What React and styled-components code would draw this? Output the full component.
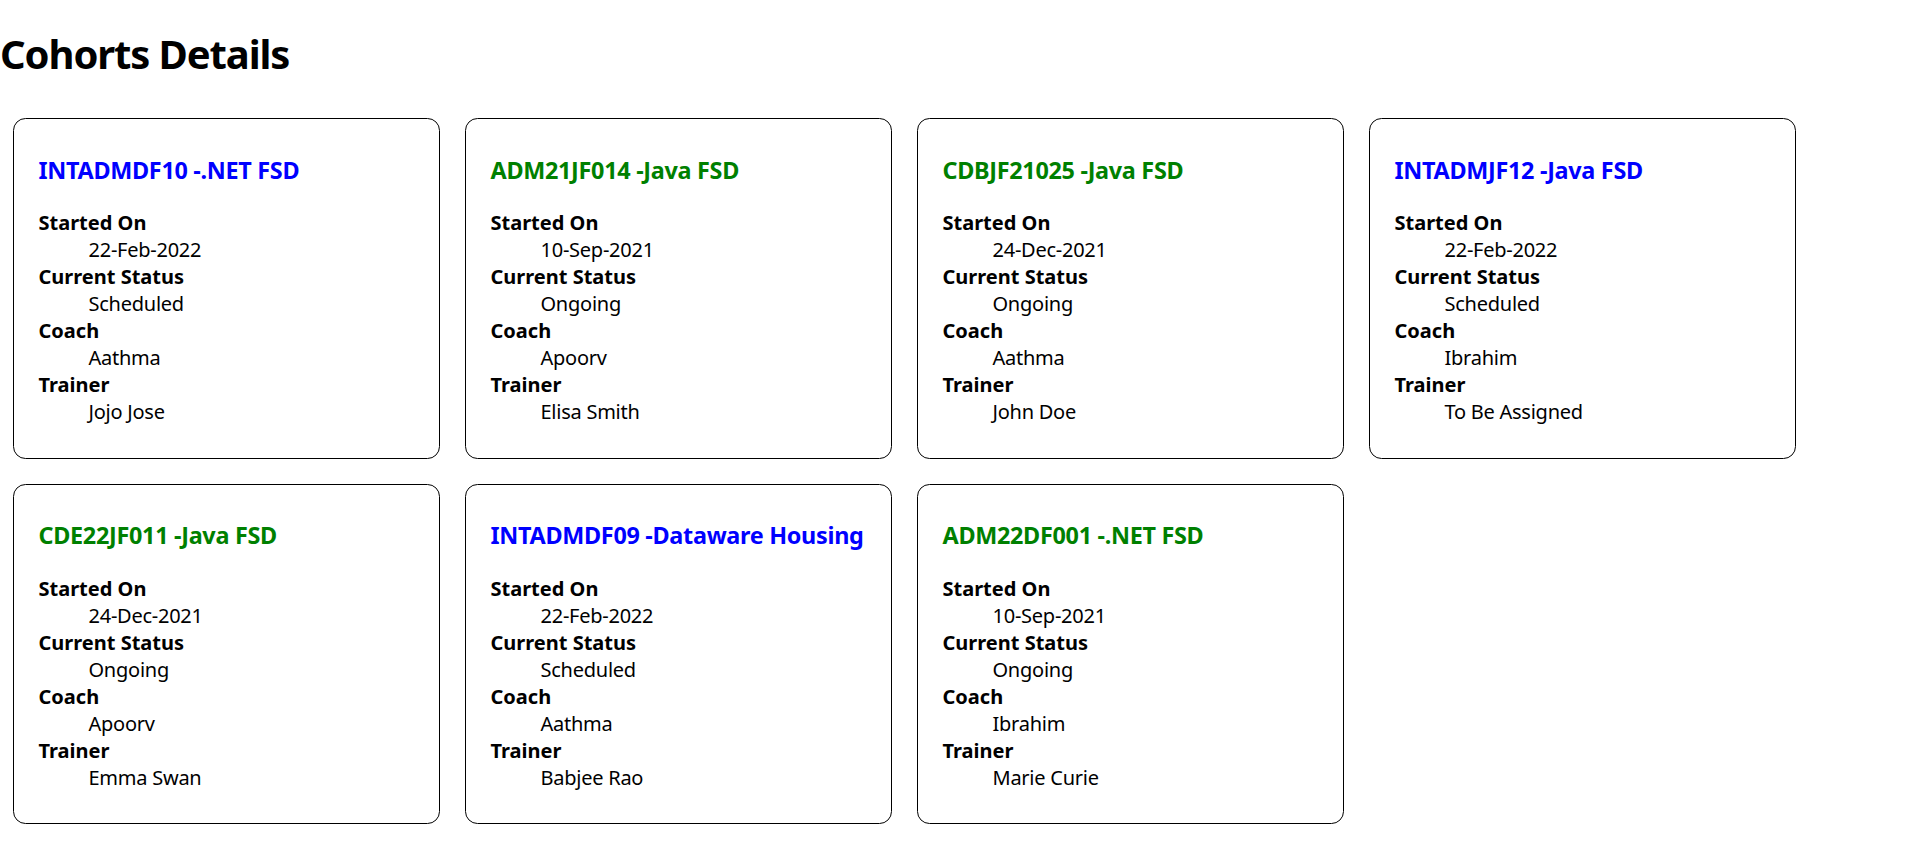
import React from "react";
import styled, { createGlobalStyle } from "styled-components";

const GlobalStyle = createGlobalStyle`
  html, body {
    margin: 0;
    padding: 0;
    background: #ffffff;
    color: #000000;
    font-family: "Noto Sans", "Open Sans", sans-serif;
  }
`;

const Page = styled.main`
  padding: 0;
`;

const Title = styled.h1`
  margin: 26.8px 0 25.5px;
  font-size: 40px;
  line-height: 53px;
  font-weight: 700;
  letter-spacing: -1.1px;
`;

const Grid = styled.div`
  display: flex;
  flex-wrap: wrap;
  align-items: flex-start;
`;

const Card = styled.section`
  box-sizing: content-box;
  width: 375px;
  margin: 12.5px;
  padding: 12.5px 25px;
  border: 1.25px solid #000;
  border-radius: 12.5px;
`;

const CardTitle = styled.h3`
  margin: 23.4px 0;
  font-size: 23.4px;
  line-height: 31px;
  font-weight: 700;
  white-space: nowrap;
  letter-spacing: -0.3px;
  color: ${(p) => (p.$tone === "blue" ? "#0000ff" : "#008000")};
`;

const List = styled.dl`
  margin: 20px 0;
`;

const Term = styled.dt`
  font-size: 20px;
  line-height: 27px;
  font-weight: 700;
`;

const Value = styled.dd`
  margin: 0 0 0 50px;
  font-size: 20px;
  line-height: 27px;
  letter-spacing: -0.25px;
`;

const cohorts = [
  { code: "INTADMDF10", tech: ".NET FSD", start: "22-Feb-2022", status: "Scheduled", coach: "Aathma", trainer: "Jojo Jose" },
  { code: "ADM21JF014", tech: "Java FSD", start: "10-Sep-2021", status: "Ongoing", coach: "Apoorv", trainer: "Elisa Smith" },
  { code: "CDBJF21025", tech: "Java FSD", start: "24-Dec-2021", status: "Ongoing", coach: "Aathma", trainer: "John Doe" },
  { code: "INTADMJF12", tech: "Java FSD", start: "22-Feb-2022", status: "Scheduled", coach: "Ibrahim", trainer: "To Be Assigned" },
  { code: "CDE22JF011", tech: "Java FSD", start: "24-Dec-2021", status: "Ongoing", coach: "Apoorv", trainer: "Emma Swan" },
  { code: "INTADMDF09", tech: "Dataware Housing", start: "22-Feb-2022", status: "Scheduled", coach: "Aathma", trainer: "Babjee Rao" },
  { code: "ADM22DF001", tech: ".NET FSD", start: "10-Sep-2021", status: "Ongoing", coach: "Ibrahim", trainer: "Marie Curie" },
];

function CohortCard({ c }) {
  const tone = c.status === "Scheduled" ? "blue" : "green";
  return (
    <Card>
      <CardTitle $tone={tone}>
        {c.code} -{c.tech}
      </CardTitle>
      <List>
        <Term>Started On</Term>
        <Value>{c.start}</Value>
        <Term>Current Status</Term>
        <Value>{c.status}</Value>
        <Term>Coach</Term>
        <Value>{c.coach}</Value>
        <Term>Trainer</Term>
        <Value>{c.trainer}</Value>
      </List>
    </Card>
  );
}

export default function App() {
  return (
    <Page>
      <GlobalStyle />
      <Title>Cohorts Details</Title>
      <Grid>
        {cohorts.map((c) => (
          <CohortCard key={c.code} c={c} />
        ))}
      </Grid>
    </Page>
  );
}
